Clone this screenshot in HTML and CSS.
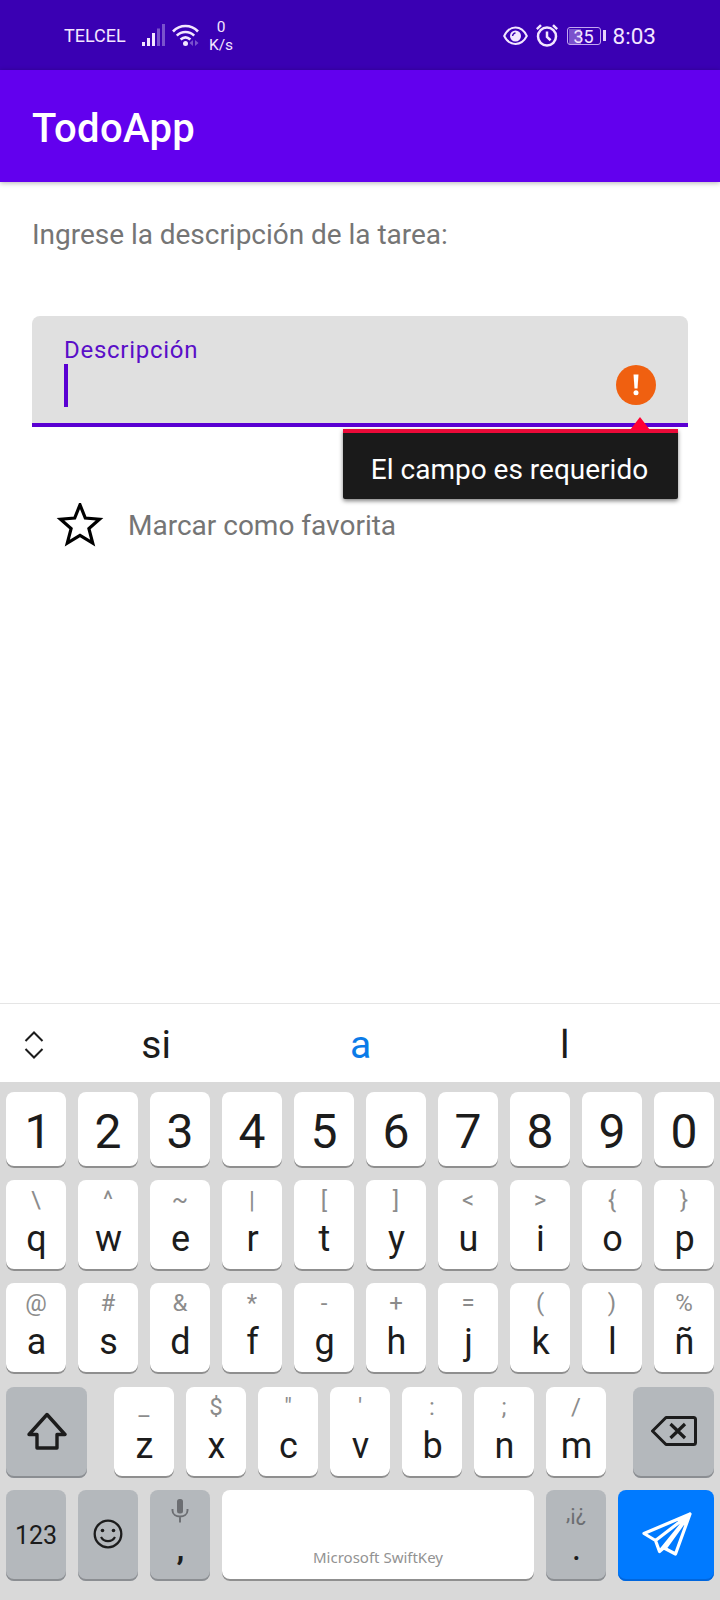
FILE: index.html
```
<!DOCTYPE html>
<html lang="es">
<head>
<meta charset="utf-8">
<title>TodoApp</title>
<link rel="stylesheet" href="styles.css">
</head>
<body>
<div class="screen">
  <header class="status">
    <span class="carrier">TELCEL</span>
    <svg class="signal" width="24" height="24" viewBox="0 0 24 24">
      <g fill="#f3e6ff"><rect x="0" y="18" width="3" height="4"/><rect x="5" y="14" width="3" height="8"/><rect x="10" y="9" width="3" height="13"/></g>
      <g fill="#7a52cd"><rect x="15" y="4.500" width="3" height="17.500"/><rect x="20" y="0" width="3" height="22"/></g>
    </svg>
    <svg class="wifi" width="28" height="24" viewBox="0 0 28 24">
      <g fill="none" stroke="#f3e6ff" stroke-width="2.600"><path d="M1 7.500C8 .2 19 .2 26 7.500"/><path d="M4.800 11.600c5-4.800 12.400-4.800 17.400 0"/><path d="M8.600 15.500c3-2.700 6.800-2.700 9.800 0"/></g>
      <circle cx="13.500" cy="19.500" r="2.500" fill="#f3e6ff"/>
      <path d="M21 16v6l-3.500-3zM23 16v6l3.500-3z" fill="#7a52cd"/>
    </svg>
    <span class="speed"><span>0</span><span>K/s</span></span>
    <span class="status-right">
      <svg width="25" height="20" viewBox="0 0 25 20">
        <path d="M1.200 10C6.500-1.300 18.500-1.300 23.800 10 18.500 20.500 6.500 20.500 1.200 10z" fill="none" stroke="#f3e6ff" stroke-width="2"/>
        <circle cx="12.500" cy="10" r="5.500" fill="#f3e6ff"/>
        <path d="M9.600 10c0-1.700 1.300-2.900 2.900-2.900" fill="none" stroke="#3a00b3" stroke-width="1.500"/>
      </svg>
      <svg class="alarm" width="22" height="24" viewBox="0 0 22 24">
        <g fill="none" stroke="#f3e6ff" stroke-width="2.500"><circle cx="11" cy="12.600" r="9"/><path d="M.8 5.200 5 1.200M21.200 5.200 17 1.200M11 7.600v5.400l3.600 3.200"/></g>
      </svg>
      <span class="battery"><span class="battery-body">35</span><span class="battery-tip"></span></span>
      <span class="clock">8:03</span>
    </span>
  </header>
  <div class="appbar">TodoApp</div>
  <main class="content">
    <p class="prompt">Ingrese la descripción de la tarea:</p>
    <div class="field">
      <div class="field-text">
        <span class="field-label">Descripción</span>
        <span class="caret"></span>
      </div>
      <span class="error-icon">
        <svg width="40" height="40" viewBox="0 0 40 40"><circle cx="20" cy="20" r="20" fill="#f06010"/><path d="M17.500 9.500h5l-1 14h-3z" fill="#fff"/><circle cx="20" cy="27.700" r="2.500" fill="#fff"/></svg>
      </span>
      <div class="tooltip">El campo es requerido
        <svg class="tooltip-arrow" width="20" height="13" viewBox="0 0 20 13"><path d="M10 0 20 13H0z" fill="#ff0033"/></svg>
      </div>
    </div>
    <div class="favorite">
      <svg width="48" height="46" viewBox="0 0 48 46"><path d="M24 1.800 29.300 15 43.500 16.200 32.900 25.600 36.700 40 24 32.400 11.300 40 15.100 25.600 4.500 16.200 18.700 15z" fill="none" stroke="#000" stroke-width="3.200"/></svg>
      <span>Marcar como favorita</span>
    </div>
  </main>
  <section class="suggestions">
    <svg class="expand" width="20" height="28" viewBox="0 0 20 28"><path d="M1.500 10 10 1.500 18.500 10M1.500 18l8.500 8.500L18.500 18" fill="none" stroke="#1c1c1c" stroke-width="2"/></svg>
    <div class="words"><span>si</span><span class="active">a</span><span>l</span></div>
  </section>
  <section class="keyboard">
    <div class="row numbers">
      <span class="key one">1</span><span class="key">2</span><span class="key">3</span><span class="key">4</span><span class="key">5</span><span class="key">6</span><span class="key">7</span><span class="key">8</span><span class="key">9</span><span class="key">0</span>
    </div>
    <div class="row">
      <span class="key"><i>\</i><b>q</b></span><span class="key"><i>^</i><b>w</b></span><span class="key"><i>~</i><b>e</b></span><span class="key"><i>|</i><b>r</b></span><span class="key"><i>[</i><b>t</b></span><span class="key"><i>]</i><b>y</b></span><span class="key"><i>&lt;</i><b>u</b></span><span class="key"><i>&gt;</i><b>i</b></span><span class="key"><i>{</i><b>o</b></span><span class="key"><i>}</i><b>p</b></span>
    </div>
    <div class="row">
      <span class="key"><i>@</i><b>a</b></span><span class="key"><i>#</i><b>s</b></span><span class="key"><i>&amp;</i><b>d</b></span><span class="key"><i>*</i><b>f</b></span><span class="key"><i>-</i><b>g</b></span><span class="key"><i>+</i><b>h</b></span><span class="key"><i>=</i><b>j</b></span><span class="key"><i>(</i><b>k</b></span><span class="key"><i>)</i><b>l</b></span><span class="key"><i>%</i><b>ñ</b></span>
    </div>
    <div class="row">
      <span class="key dark shift"><svg width="40" height="38" viewBox="0 0 40 38"><path d="M20 2.500 38 22.500H30V36H10V22.500H2z" fill="none" stroke="#1c1c1c" stroke-width="3.400" stroke-linejoin="round"/></svg></span>
      <span class="key"><i>_</i><b>z</b></span><span class="key"><i>$</i><b>x</b></span><span class="key"><i>"</i><b>c</b></span><span class="key"><i>'</i><b>v</b></span><span class="key"><i>:</i><b>b</b></span><span class="key"><i>;</i><b>n</b></span><span class="key"><i>/</i><b>m</b></span>
      <span class="key dark delete"><svg width="46" height="30" viewBox="0 0 46 30"><path d="M15 1.500H42.500Q44.500 1.500 44.500 3.500V26.500Q44.500 28.500 42.500 28.500H15L1.500 15z" fill="none" stroke="#1c1c1c" stroke-width="3" stroke-linejoin="round"/><path d="M19.500 8 34 22M34 8 19.500 22" stroke="#1c1c1c" stroke-width="3.200"/></svg></span>
    </div>
    <div class="row">
      <span class="key dark mode">123</span>
      <span class="key dark center"><svg width="30" height="30" viewBox="0 0 30 30"><circle cx="15" cy="15" r="13.300" fill="none" stroke="#1c1c1c" stroke-width="2.300"/><circle cx="9.500" cy="11.500" r="1.800" fill="#1c1c1c"/><circle cx="20.500" cy="11.500" r="1.800" fill="#1c1c1c"/><path d="M8 18c3 5.500 11 5.500 14 0" fill="none" stroke="#1c1c1c" stroke-width="2.200"/></svg></span>
      <span class="key dark"><span class="mic"><svg width="18" height="24" viewBox="0 0 18 24"><rect x="6" y="0" width="6" height="14.500" rx="2.500" fill="#6c6e72"/><path d="M1.500 10v1.500c0 8 15 8 15 0V10M9 17.500V23.500" fill="none" stroke="#6c6e72" stroke-width="1.900"/></svg></span><b class="comma">,</b></span>
      <span class="key space">Microsoft SwiftKey</span>
      <span class="key dark"><i class="marks">,¡¿</i><b class="period">.</b></span>
      <span class="key send"><svg width="52" height="46" viewBox="0 0 52 46"><path d="M49 3 3 22.500 14.500 29.500z M49 3 34.500 43 24 37.500z M14.500 29.500 18.500 40.500 26 34 M49 3 18.500 40.500" fill="none" stroke="#fff" stroke-width="3.200" stroke-linejoin="round"/></svg></span>
    </div>
  </section>
</div>
</body>
</html>
```

FILE: styles.css
```
* { box-sizing: border-box; }
body { margin: 0; font-family: Roboto, "Liberation Sans", sans-serif; background: #fff; }
svg { display: block; flex: none; }
.screen { width: 720px; height: 1600px; display: flex; flex-direction: column; overflow: hidden; }

.status { height: 70px; flex: none; background: #3a00b3; color: #f3e6ff; display: flex; align-items: center; padding: 1px 64px 0 64px; }
.carrier { font-size: 18px; width: 78px; line-height: 70px; }
.signal { margin-top: 1px; }
.wifi { margin: 0 0 0 6px; }
.speed { display: flex; flex-direction: column; align-items: center; width: 26px; margin-left: 8px; font-size: 15.500px; line-height: 18px; }
.status-right { margin-left: auto; display: flex; align-items: center; }
.alarm { margin-left: 8px; }
.battery { display: flex; align-items: center; margin-left: 9px; gap: 2px; }
.battery-body { width: 34px; height: 18px; border: 1.500px solid #c4a8f0; border-radius: 3px; font-size: 18px; line-height: 17px; text-align: center; background: linear-gradient(90deg, #7a52cd 12px, transparent 12px) 1px 1px no-repeat; }
.battery-tip { width: 3px; height: 11px; background: #e5d2fa; }
.clock { font-size: 22.500px; line-height: 68px; margin-left: 7px; }

.appbar { height: 112px; flex: none; background: #6200ee; color: #fff; font-size: 40px; font-weight: 500; line-height: 117px; letter-spacing: .35px; padding-left: 32px; box-shadow: 0 1px 5px rgba(0, 0, 0, .3); }

.content { flex: 1; padding: 34px 32px 0; }
.prompt { margin: 0; font-size: 28px; line-height: 37px; letter-spacing: -.03px; color: #757575; }
.field { position: relative; margin-top: 63px; height: 111px; background: #e0e0e0; border-bottom: 4px solid #5a00d2; border-radius: 8px 8px 0 0; display: flex; justify-content: space-between; padding: 20px 32px 0; }
.field-text { display: flex; flex-direction: column; }
.field-label { font-size: 24px; line-height: 28px; letter-spacing: .72px; color: #5a0fc8; }
.caret { width: 4px; height: 43px; background: #5a00d2; }
.error-icon { margin-top: 29px; }
.tooltip { position: absolute; left: 311px; top: 113px; width: 335px; height: 70px; background: #1a1a1a; border-top: 4px solid #ea0a38; border-radius: 0 0 2px 2px; box-shadow: 0 2px 4px rgba(0, 0, 0, .5); color: #fff; font-size: 28px; line-height: 74px; text-align: center; padding-right: 2px; white-space: nowrap; }
.tooltip-arrow { position: absolute; right: 28px; top: -16px; }
.favorite { display: flex; align-items: center; gap: 24px; margin-top: 73px; padding-left: 24px; font-size: 28px; line-height: 51px; color: #757575; }

.suggestions { height: 79px; flex: none; border-top: 1px solid #e5e5e5; display: flex; align-items: center; padding-left: 24px; }
.expand { margin-top: 4px; }
.words { display: flex; width: 613px; margin-left: 10px; font-size: 39px; line-height: 78px; color: #1c1c1c; padding-top: 4px; }
.words span { flex: 1; text-align: center; }
.words .active { color: #0b7be8; }

.keyboard { height: 518px; flex: none; background: #d9d9d9; padding: 10px 6px 0; }
.row { display: flex; justify-content: space-between; margin-bottom: 12.330px; height: 91px; }
.row.numbers { height: 76px; margin-bottom: 12px; font-size: 48px; line-height: 80px; }
.key { width: 60px; background: #fff; border-radius: 8px; box-shadow: inset 0 -2px 0 #8f8f8f; color: #1c1c1c; text-align: center; }
.one { padding-left: 4px; }
.key i, .key b { display: block; font-style: normal; font-weight: 400; }
.key i { font-size: 24px; line-height: 40px; height: 40px; color: #8c8c8c; }
.key b { font-size: 36px; line-height: 39px; padding-left: 1px; }
.dark { background: #b4b8bc; box-shadow: inset 0 -2px 0 #8b8e92; }
.shift, .delete { width: 81px; display: flex; align-items: center; justify-content: center; padding-bottom: 2px; }
.shift { margin-right: 15px; }
.delete { margin-left: 15px; padding-bottom: 3px; }
.mode { font-size: 25px; line-height: 91px; letter-spacing: -.1px; }
.center { display: flex; align-items: center; justify-content: center; padding-bottom: 3px; }
.mic { display: flex; justify-content: center; height: 40px; padding-top: 9px; }
.key .comma { font-weight: 700; font-size: 32px; }
.key .marks { font-size: 22px; line-height: 46px; color: #6c6e72; }
.key .period { line-height: 36px; }
.space { width: 312px; color: #929292; font: 15px/20px "Noto Sans", sans-serif; padding-top: 57px; }
.send { width: 96px; background: #007aff; box-shadow: inset 0 -2px 0 #0066dd; display: flex; align-items: center; justify-content: center; padding: 0 0 2px 1px; }
```
